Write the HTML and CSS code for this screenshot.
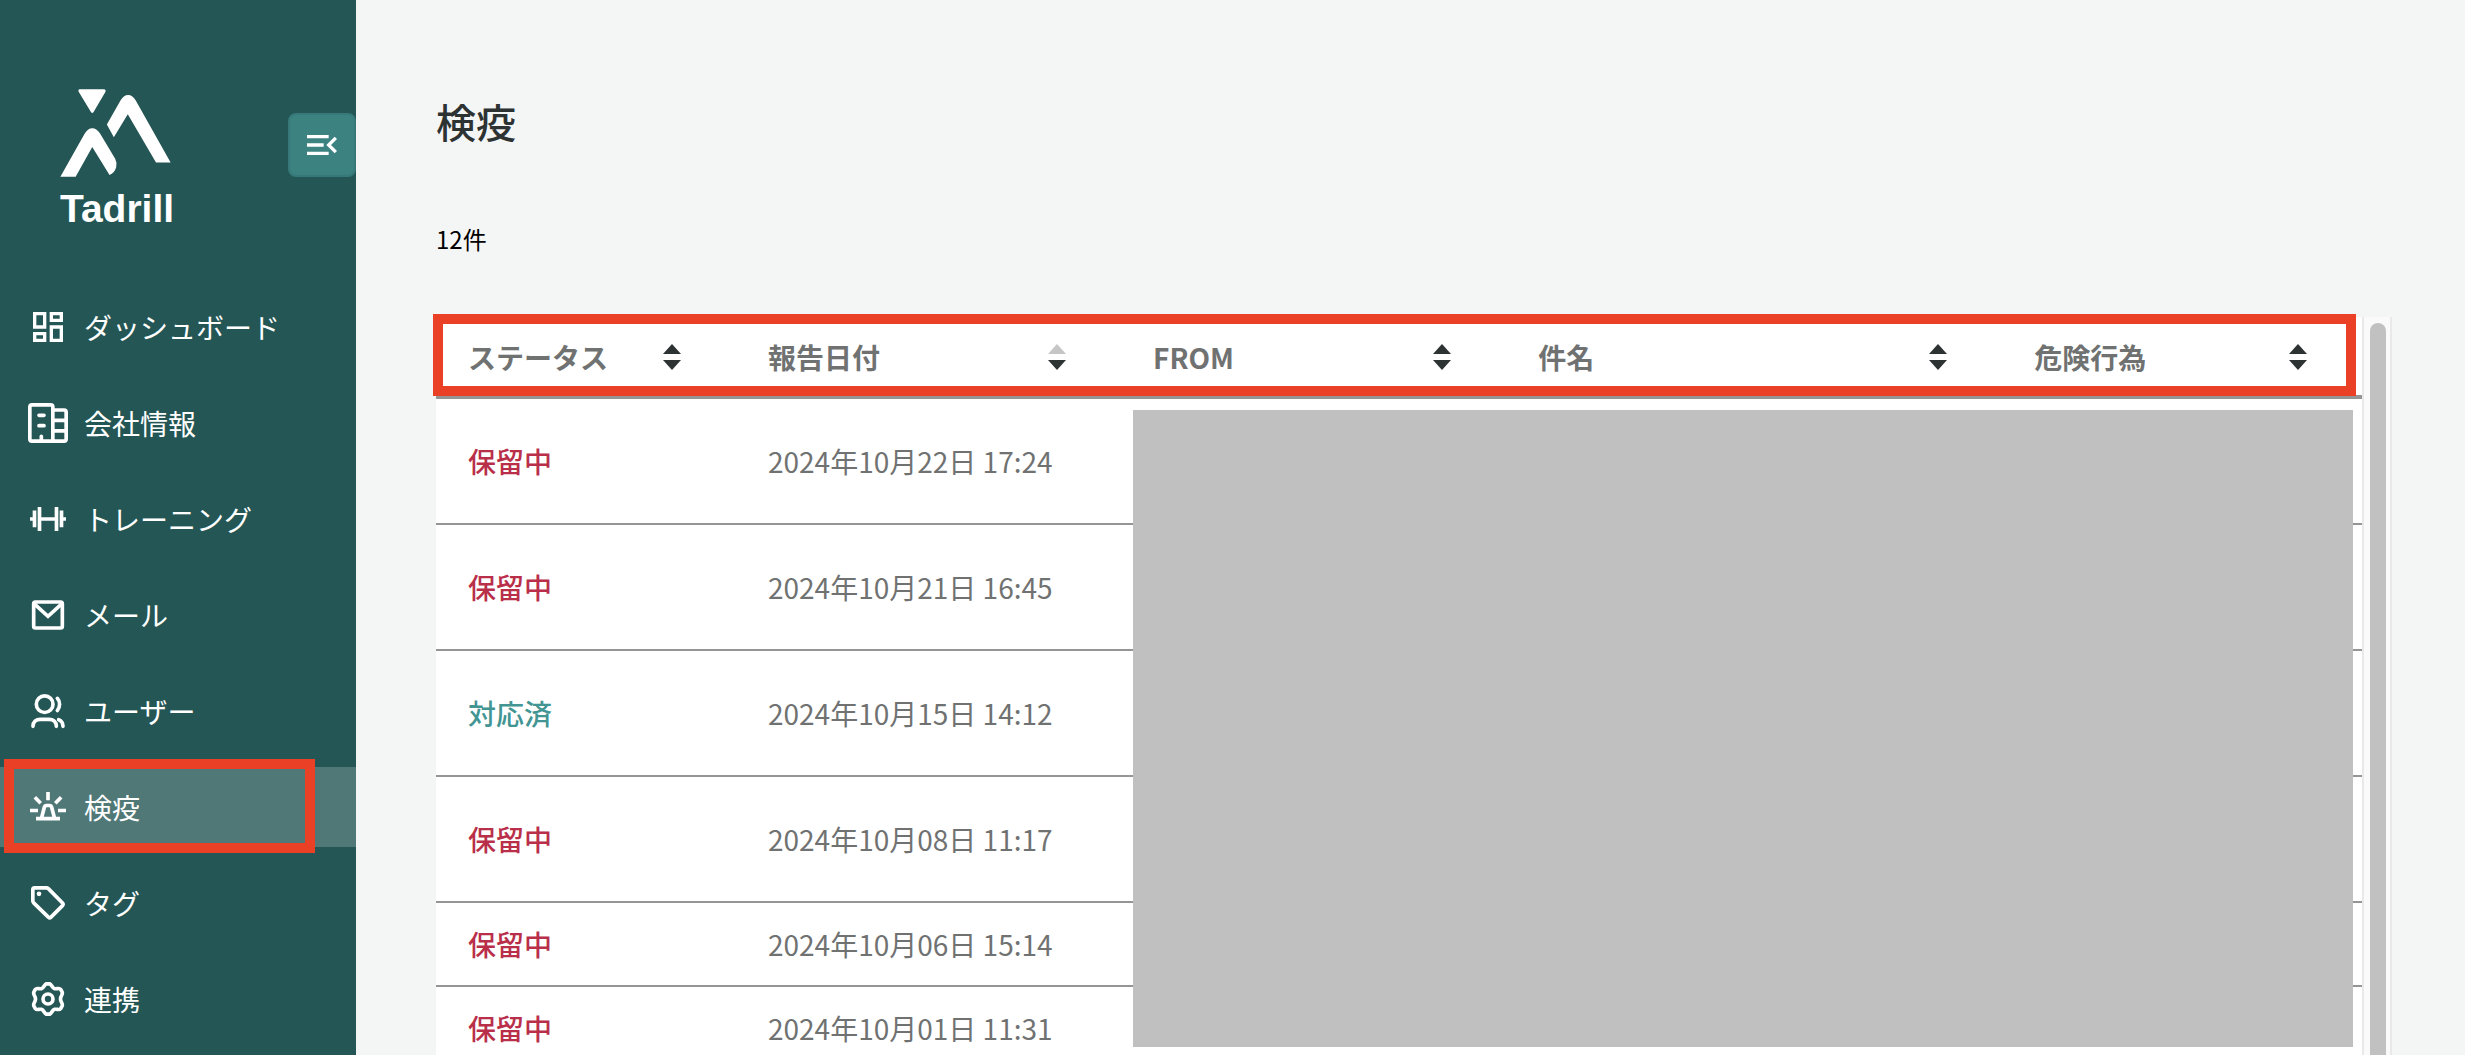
FILE: index.html
```html
<!DOCTYPE html>
<html lang="ja">
<head>
  <meta charset="utf-8">
  <title>検疫 | Tadrill</title>
  <meta name="viewport" content="width=device-width,initial-scale=1">
  <link rel="stylesheet" href="styles.css">
</head>

<body>
  <div class="app">
    <aside class="sidebar">
      <div class="sidebar-head">
        <a class="logo" href="#">
          <svg class="logo-mark" viewBox="180 86 334 265" aria-hidden="true">
            <path d="M240 87H312Q320 88 316 96L281 155Q277 161 273 155L237 96Q232 88 240 87Z"/>
            <path d="M321 193L362 121Q371 104 385 104Q399 104 408 121L513 307H469L384 162L342 231Z"/>
            <path d="M181 350L254 221Q263 204 277 204Q291 204 301 221L346 296Q352 307 349 322Q344 340 329 345L277 261L227 350Z"/>
          </svg>
          <span class="logo-text">Tadrill</span>
        </a>
        <button class="toggle" type="button" aria-label="メニューを閉じる">
          <svg class="icon" viewBox="0 0 24 24"><path class="fill" d="M3 18h13v-2H3v2zM3 6v2h13V6H3zm0 7h10v-2H3v2zm18 2.59L17.42 12 21 8.41 19.59 7l-5 5 5 5L21 15.59z"/></svg>
        </button>
      </div>

      <nav class="nav">
        <a class="nav-item" href="#">
          <svg class="icon" viewBox="0 0 24 24"><path class="fill" d="M19 5v2h-4V5h4M9 5v6H5V5h4m10 8v6h-4v-6h4M9 17v2H5v-2h4M21 3h-8v6h8V3zM11 3H3v10h8V3zm10 8h-8v10h8V11zM11 15H3v6h8v-6z"/></svg>
          <span>ダッシュボード</span>
        </a>
        <a class="nav-item" href="#">
          <svg class="icon" viewBox="0 0 24 24"><path d="M2.4 1.1H13.6Q14.9 1.1 14.9 2.4V22.9H2.4Q1.1 22.9 1.1 21.6V2.4Q1.1 1.1 2.4 1.1ZM15 4.2H21.6Q22.9 4.2 22.9 5.5V21.6Q22.9 22.9 21.6 22.9H15M15 10.4H22.9M15 16.7H22.9"/><path class="round" d="M6.6 7.4H9.6M6.6 13.6H9.6M8 20V22"/></svg>
          <span>会社情報</span>
        </a>
        <a class="nav-item" href="#">
          <svg class="icon" viewBox="0 0 24 24"><path d="M6.9 4.8V19.2M17.1 4.8V19.2M3.9 6.9V17M20.1 6.9V17M1.2 12H4M6.9 12H17.1M20 12H22.8"/></svg>
          <span>トレーニング</span>
        </a>
        <a class="nav-item" href="#">
          <svg class="icon" viewBox="0 0 24 24"><rect x="3.4" y="4.2" width="17.2" height="15.6" rx="1"/><path d="M3.6 5.2L12 12.8L20.4 5.2"/></svg>
          <span>メール</span>
        </a>
        <a class="nav-item" href="#">
          <svg class="icon" viewBox="0 0 24 24"><circle cx="10" cy="7.9" r="5"/><path class="round" d="M3 21.2C3 18.6 4.8 17 7.4 17H12.6C15.2 17 17 18.6 17 21.2M17.6 4.4C19.4 6.3 19.4 9.7 17.6 11.7M18.4 17.2C20 17.8 21 19.2 21 21.2"/></svg>
          <span>ユーザー</span>
        </a>
        <a class="nav-item is-active" href="#" aria-current="page">
          <svg class="icon" viewBox="0 0 24 24"><path d="M12 3V8M4.1 6.2L7.6 9.8M19.9 6.2L16.4 9.8M1.2 14.1H6M18 14.1H22.8M4.8 19H19.2M8 19L9.8 12.2Q10.1 11.1 11.1 11.1H12.9Q13.9 11.1 14.2 12.2L16 19"/></svg>
          <span>検疫</span>
        </a>
        <a class="nav-item" href="#">
          <svg class="icon" viewBox="0 0 24 24"><path d="M3.9 2.9H11Q11.7 2.9 12.2 3.4L20.7 12Q21.4 12.8 20.7 13.6L13.8 20.5Q13 21.3 12.2 20.5L3.4 11.9Q2.9 11.4 2.9 10.7V3.9Q2.9 2.9 3.9 2.9Z"/><circle class="fill" cx="6.6" cy="6.5" r="1.4"/></svg>
          <span>タグ</span>
        </a>
        <a class="nav-item" href="#">
          <svg class="icon" viewBox="0 0 24 24"><path d="M11 2.9H13C14.2 3.3 14.2 5.2 16 5.8C17.4 6.2 18.6 5 19.6 6.2L20.6 8C21 9.4 19.5 10 19.5 12C19.5 14 21 14.6 20.6 16L19.6 17.8C18.6 19 17.4 17.8 16 18.2C14.2 18.8 14.2 20.7 13 21.1H11C9.8 20.7 9.8 18.8 8 18.2C6.6 17.8 5.4 19 4.4 17.8L3.4 16C3 14.6 4.5 14 4.5 12C4.5 10 3 9.4 3.4 8L4.4 6.2C5.4 5 6.6 6.2 8 5.8C9.8 5.2 9.8 3.3 11 2.9Z"/><circle cx="12" cy="12" r="3"/></svg>
          <span>連携</span>
        </a>
      </nav>
    </aside>

    <main class="main">
      <h1 class="title">検疫</h1>
      <p class="count">12件</p>

      <div class="panel">
        <div class="table-wrap">
          <table class="table">
            <colgroup>
              <col class="col-status">
              <col class="col-date">
              <col class="col-from">
              <col class="col-subject">
              <col>
            </colgroup>
            <thead>
              <tr>
                <th scope="col"><div class="th-inner">ステータス<button class="sort" type="button" aria-label="ステータスで並べ替え"><svg viewBox="0 0 18 26"><path d="M9 0L18 10H0Z"/><path d="M0 16H18L9 26Z"/></svg></button></div></th>
                <th scope="col"><div class="th-inner">報告日付<button class="sort" type="button" aria-label="報告日付で並べ替え"><svg viewBox="0 0 18 26"><path class="off" d="M9 0L18 10H0Z"/><path d="M0 16H18L9 26Z"/></svg></button></div></th>
                <th scope="col"><div class="th-inner">FROM<button class="sort" type="button" aria-label="FROMで並べ替え"><svg viewBox="0 0 18 26"><path d="M9 0L18 10H0Z"/><path d="M0 16H18L9 26Z"/></svg></button></div></th>
                <th scope="col"><div class="th-inner">件名<button class="sort" type="button" aria-label="件名で並べ替え"><svg viewBox="0 0 18 26"><path d="M9 0L18 10H0Z"/><path d="M0 16H18L9 26Z"/></svg></button></div></th>
                <th scope="col"><div class="th-inner">危険行為<button class="sort" type="button" aria-label="危険行為で並べ替え"><svg viewBox="0 0 18 26"><path d="M9 0L18 10H0Z"/><path d="M0 16H18L9 26Z"/></svg></button></div></th>
              </tr>
            </thead>
            <tbody>
              <tr class="tall"><td class="pending">保留中</td><td>2024年10月22日 17:24</td><td></td><td></td><td></td></tr>
              <tr class="tall"><td class="pending">保留中</td><td>2024年10月21日 16:45</td><td></td><td></td><td></td></tr>
              <tr class="tall"><td class="done">対応済</td><td>2024年10月15日 14:12</td><td></td><td></td><td></td></tr>
              <tr class="tall"><td class="pending">保留中</td><td>2024年10月08日 11:17</td><td></td><td></td><td></td></tr>
              <tr><td class="pending">保留中</td><td>2024年10月06日 15:14</td><td></td><td></td><td></td></tr>
              <tr><td class="pending">保留中</td><td>2024年10月01日 11:31</td><td></td><td></td><td></td></tr>
            </tbody>
          </table>
        </div>
        <div class="scrollbar"><div class="thumb"></div></div>
        <div class="mask"></div>
        <div class="mark mark-head"></div>
      </div>
    </main>
  </div>
</body>
</html>
```

FILE: styles.css
```css
* {
  box-sizing: border-box;
}

body {
  margin: 0;
  background: #f4f6f5;
  color: #000;
  font-family: "Noto Sans CJK JP", "Noto Sans", sans-serif;
  font-size: 28px;
  line-height: 40px;
}

button {
  padding: 0;
  border: 0;
  background: none;
  cursor: pointer;
}

.app {
  display: flex;
  height: 100vh;
  overflow: hidden;
}

/* sidebar */
.sidebar {
  flex: none;
  width: 356px;
  background: #245655;
  color: #fff;
}

.sidebar-head {
  display: flex;
  justify-content: space-between;
  align-items: flex-start;
  height: 287px;
  padding: 89px 0 0 60px;
}

.logo {
  display: flex;
  flex-direction: column;
  gap: 12px;
  color: inherit;
  text-decoration: none;
}

.logo-mark {
  width: 111px;
  height: 88px;
  fill: #fff;
}

.logo-text {
  font: bold 39px/40px "Liberation Sans", Arial, sans-serif;
}

.toggle {
  display: flex;
  align-items: center;
  justify-content: center;
  width: 68px;
  height: 64px;
  margin-top: 24px;
  border: 2px solid #37797a;
  border-radius: 8px;
  background: #3b8280;
}

.icon {
  flex: none;
  width: 40px;
  height: 40px;
  fill: none;
  stroke: #fff;
  stroke-width: 2.2;
}

.icon .fill {
  fill: #fff;
  stroke: none;
}

.icon .round {
  stroke-linecap: round;
}

.nav {
  display: flex;
  flex-direction: column;
  gap: 16px;
}

.nav-item {
  position: relative;
  display: flex;
  align-items: center;
  gap: 16px;
  height: 80px;
  padding: 0 28px;
  color: inherit;
  text-decoration: none;
}

.nav-item.is-active {
  background: #507877;
}

/* red highlight frames */
.mark,
.nav-item.is-active::after {
  position: absolute;
  border: 10px solid #ea4025;
  pointer-events: none;
}

.nav-item.is-active::after {
  content: '';
  top: -8px;
  right: 41px;
  bottom: -6px;
  left: 4px;
}

.mark-head {
  top: -3px;
  right: 36px;
  left: -3px;
  height: 82px;
}

/* main */
.main {
  flex: 1;
  display: flex;
  flex-direction: column;
  min-width: 0;
  padding: 91px 73px 0 80px;
}

.title {
  margin: 0;
  color: #2d3232;
  font-size: 40px;
  font-weight: 500;
  line-height: 60px;
}

.count {
  margin: 68px 0 58px;
  font-size: 24px;
}

.panel {
  position: relative;
  flex: 1;
  display: flex;
  min-height: 0;
}

.table-wrap {
  flex: 1;
  overflow: hidden;
  background: #fff;
}

.table {
  width: 100%;
  table-layout: fixed;
  border-collapse: separate;
  border-spacing: 0;
  color: #707272;
}

.col-status {
  width: 300px;
}

.col-date {
  width: 385px;
}

.col-from {
  width: 20%;
}

.col-subject {
  width: 25.75%;
}

.table th,
.table td {
  height: 84px;
  padding: 0 32px;
  border-bottom: 2px solid #959595;
  text-align: left;
}

.table th {
  height: 82px;
  padding: 2px 55px 0 32px;
  border-bottom-width: 4px;
  font-weight: bold;
}

.table .tall td {
  height: 126px;
}

.table .pending {
  color: #b92f4a;
  font-weight: 500;
}

.table .done {
  color: #429593;
  font-weight: 500;
}

.th-inner {
  display: flex;
  align-items: center;
  justify-content: space-between;
}

.sort {
  display: flex;
}

.sort svg {
  width: 18px;
  height: 26px;
  fill: #2d3232;
}

.sort .off {
  fill: #c6c6c6;
}

.scrollbar {
  flex: none;
  width: 30px;
  padding: 6px 4px 0 6px;
  border: solid #e9e9e9;
  border-width: 0 2px;
  background: #fafafa;
}

.thumb {
  width: 16px;
  height: 100%;
  border-radius: 8px 8px 0 0;
  background: #c1c1c1;
}

/* covers sender and subject details */
.mask {
  position: absolute;
  top: 93px;
  right: 39px;
  bottom: 8px;
  left: 697px;
  background: #c0c0c0;
}
```
